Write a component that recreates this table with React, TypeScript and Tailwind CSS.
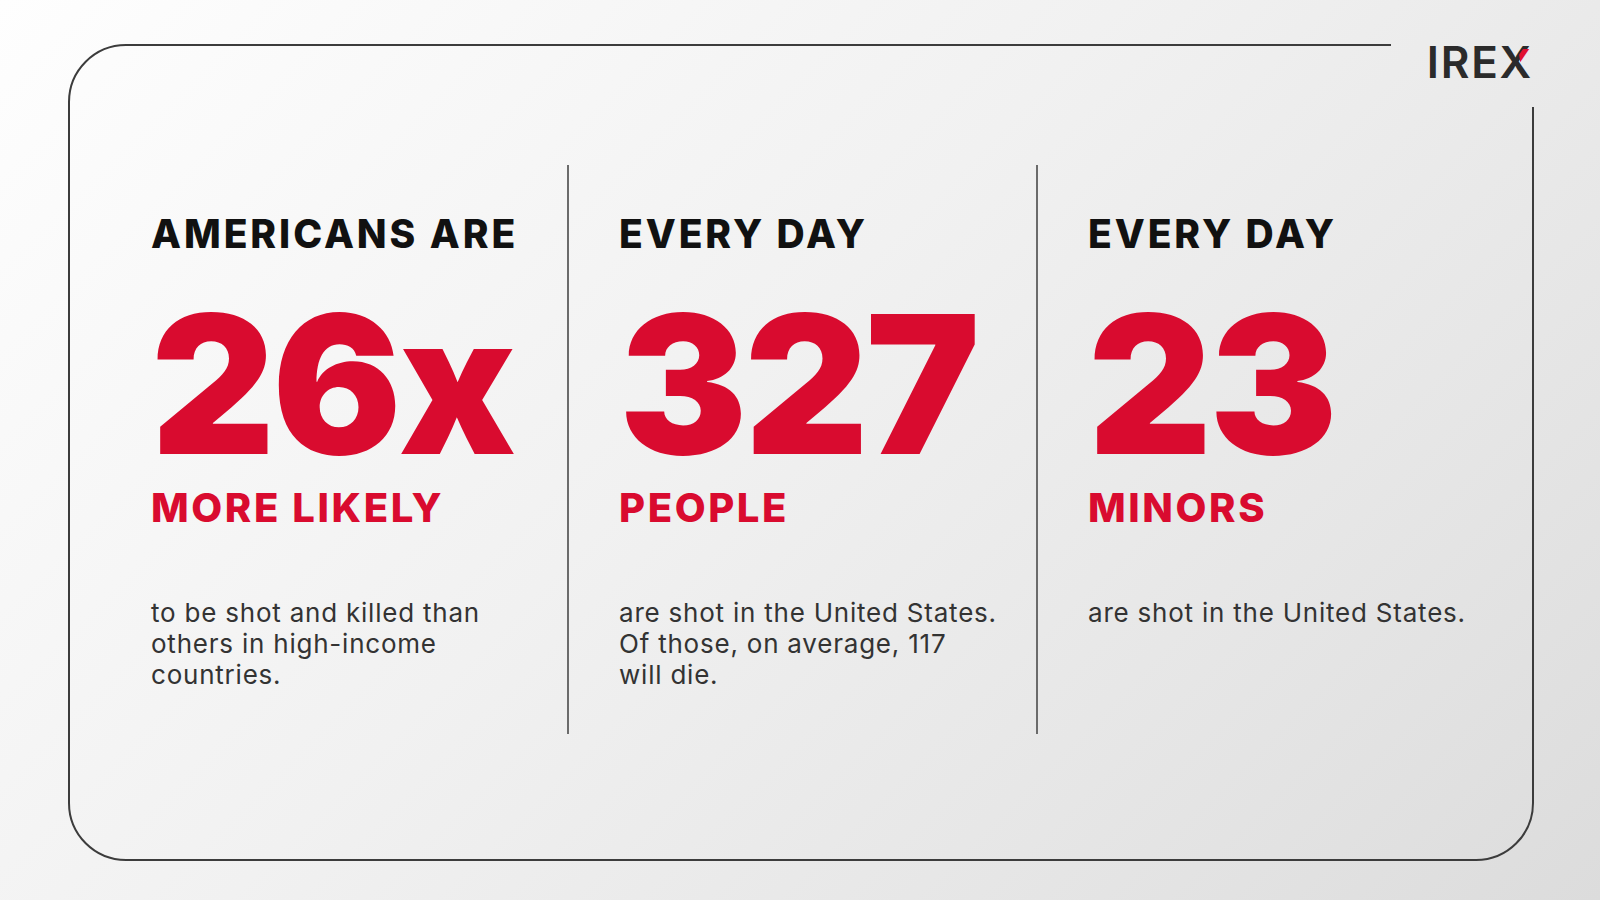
import React from "react";

const stats = [
  {
    lead: "AMERICANS ARE",
    value: "26x",
    unit: "MORE LIKELY",
    lines: ["to be shot and killed than", "others in high-income", "countries."],
  },
  {
    lead: "EVERY DAY",
    value: "327",
    unit: "PEOPLE",
    lines: ["are shot in the United States.", "Of those, on average, 117", "will die."],
  },
  {
    lead: "EVERY DAY",
    value: "23",
    unit: "MINORS",
    lines: ["are shot in the United States."],
  },
];

const pageBg =
  "bg-fixed bg-[linear-gradient(135deg,#fefefe_0%,#f1f1f1_45%,#e6e6e6_75%,#dcdcdc_100%)]";

function Stat({ lead, value, unit, lines }: (typeof stats)[number]) {
  return (
    <div className="pt-[49px] font-['Inter',sans-serif]">
      <p className="text-[39px] leading-[39px] font-extrabold tracking-[0.075em] text-[#111]">{lead}</p>
      <p className="mt-[35px] text-[192px] leading-[192px] font-black tracking-[-0.015em] text-[#d90b2f]">
        {value}
      </p>
      <p className="mt-[8px] text-[40px] leading-[40px] font-extrabold tracking-[0.065em] text-[#d90b2f]">
        {unit}
      </p>
      <p className="mt-[69px] text-[26px] leading-[31px] tracking-[0.03em] text-[#333]">
        {lines.map((l, i) => (
          <span key={i} className="block whitespace-nowrap">
            {l}
          </span>
        ))}
      </p>
    </div>
  );
}

export default function App() {
  return (
    <div className={`h-[900px] w-full overflow-hidden pt-[44px] pl-[68px] ${pageBg}`}>
      <div className="relative h-[817px] w-[1466px] rounded-[58px] border-2 border-[#3c3c3c]">
        {/* logo sits over a gap in the top-right corner of the frame */}
        <div className={`absolute -top-[6px] -right-[6px] h-[67px] w-[147px] ${pageBg}`}>
          <span className="absolute right-[5px] top-[-8px] font-['Inter',sans-serif] text-[44px] font-semibold leading-[60px] tracking-[0.04em] text-[#2b2b2b]">
            IRE
            <span className="relative">
              X
              <span
                aria-hidden
                className="absolute left-0 top-0 text-[#e0102f] [clip-path:polygon(50%_0,100%_0,100%_40%,62%_46%)]"
              >
                X
              </span>
            </span>
          </span>
        </div>

        <div className="ml-[81px] mt-[119px] flex h-[569px]">
          <div className="w-[416px]">
            <Stat {...stats[0]} />
          </div>
          <div className="w-[2px] bg-[#6b6b6b]" />
          <div className="w-[467px] pl-[50px]">
            <Stat {...stats[1]} />
          </div>
          <div className="w-[2px] bg-[#6b6b6b]" />
          <div className="pl-[50px]">
            <Stat {...stats[2]} />
          </div>
        </div>
      </div>
    </div>
  );
}
